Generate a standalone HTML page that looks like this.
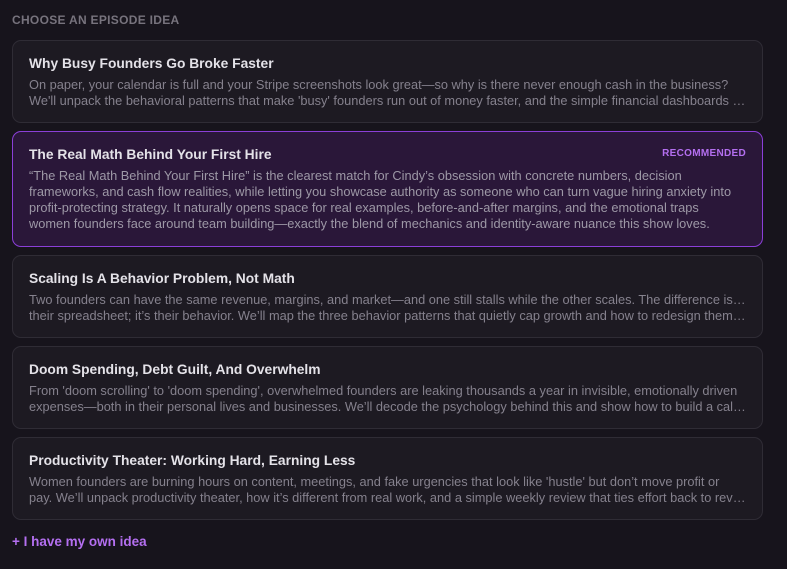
<!DOCTYPE html>
<html><head><style>
*{margin:0;padding:0;box-sizing:border-box}
body{width:787px;height:569px;background:#17141c;font-family:"Liberation Sans",sans-serif;overflow:hidden;position:relative}
.h{position:absolute;left:12px;top:13px;font-size:12px;font-weight:bold;color:#77737d;letter-spacing:0.3px}
.c{position:absolute;left:12px;width:751px;border:1px solid #2f2c35;background:#1d1a22;border-radius:9px;padding:14px 16px 0 16px}
.c h3{font-size:13.8px;font-weight:bold;color:#e4e2e8;line-height:17px;margin-bottom:5px}
.c p{font-size:12.8px;color:#85818d;line-height:16px;white-space:nowrap;overflow:hidden;text-overflow:ellipsis}
.s{background:#2a1739;border-color:#8b3fd8}
.s p{color:#9d98a6}
.r{position:absolute;right:16px;top:16px;font-size:10px;font-weight:bold;color:#b46ff0;letter-spacing:0.3px}
.own{position:absolute;left:12px;top:534px;font-size:13.5px;font-weight:bold;color:#b46ff0}
</style></head><body>
<div class="h">CHOOSE AN EPISODE IDEA</div>
<div class="c" style="top:40px;height:83px"><h3>Why Busy Founders Go Broke Faster</h3><p>On paper, your calendar is full and your Stripe screenshots look great—so why is there never enough cash in the business?</p><p>We'll unpack the behavioral patterns that make 'busy' founders run out of money faster, and the simple financial dashboards that help you see it sooner.</p></div>
<div class="c s" style="top:131px;height:116px"><span class="r">RECOMMENDED</span><h3>The Real Math Behind Your First Hire</h3><p>“The Real Math Behind Your First Hire” is the clearest match for Cindy’s obsession with concrete numbers, decision</p><p>frameworks, and cash flow realities, while letting you showcase authority as someone who can turn vague hiring anxiety into</p><p>profit-protecting strategy. It naturally opens space for real examples, before-and-after margins, and the emotional traps</p><p>women founders face around team building—exactly the blend of mechanics and identity-aware nuance this show loves.</p></div>
<div class="c" style="top:255px;height:83px"><h3>Scaling Is A Behavior Problem, Not Math</h3><p>Two founders can have the same revenue, margins, and market—and one still stalls while the other scales. The difference isn’t</p><p>their spreadsheet; it’s their behavior. We’ll map the three behavior patterns that quietly cap growth and how to redesign them for scale.</p></div>
<div class="c" style="top:346px;height:83px"><h3>Doom Spending, Debt Guilt, And Overwhelm</h3><p>From 'doom scrolling' to 'doom spending', overwhelmed founders are leaking thousands a year in invisible, emotionally driven</p><p>expenses—both in their personal lives and businesses. We’ll decode the psychology behind this and show how to build a calmer system.</p></div>
<div class="c" style="top:437px;height:83px"><h3>Productivity Theater: Working Hard, Earning Less</h3><p>Women founders are burning hours on content, meetings, and fake urgencies that look like 'hustle' but don’t move profit or</p><p>pay. We’ll unpack productivity theater, how it’s different from real work, and a simple weekly review that ties effort back to revenue.</p></div>
<div class="own">+ I have my own idea</div>
</body></html>
